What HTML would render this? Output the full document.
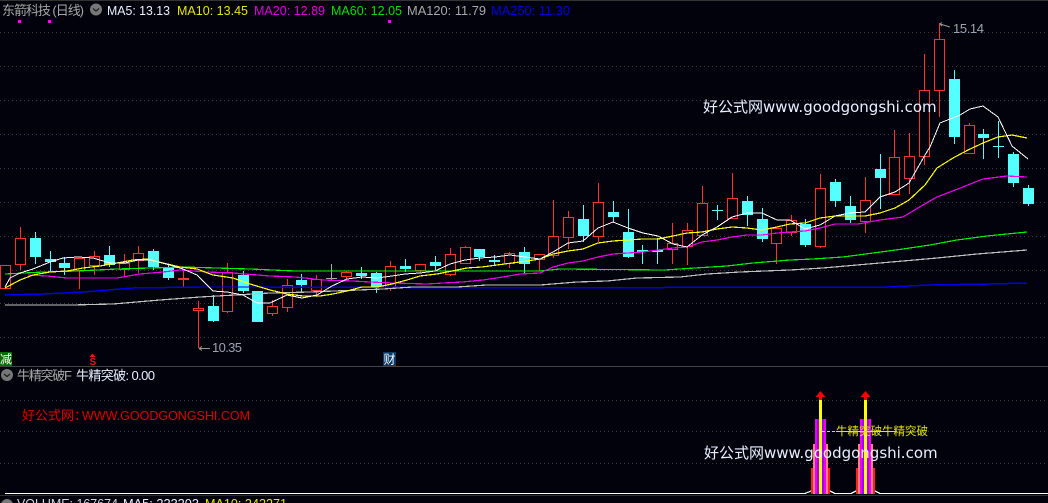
<!DOCTYPE html>
<html lang="zh">
<head>
<meta charset="utf-8">
<title>东箭科技 (日线)</title>
<style>
html,body{margin:0;padding:0;background:#02020c;width:1048px;height:503px;overflow:hidden}
svg{display:block;position:absolute;left:0;top:0}
text{font-family:"Liberation Sans","Noto Sans CJK SC",sans-serif;font-size:13px;white-space:pre}
text.wm{font-family:"DejaVu Sans","Noto Sans CJK SC",sans-serif;font-size:15px}
</style>
</head>
<body>
<svg width="1048" height="503" viewBox="0 0 1048 503" xmlns="http://www.w3.org/2000/svg">
<rect width="1048" height="503" fill="#02020c"/>
<path d="M0 0.5H1048" stroke="#333" shape-rendering="crispEdges"/>
<g stroke="#3c3c3c" stroke-dasharray="1 3" shape-rendering="crispEdges">
<path d="M0 32.5H1048M0 66.5H1048M0 100.5H1048M0 134.5H1048M0 168.5H1048M0 202.5H1048M0 236.5H1048M0 270.5H1048M0 303.5H1048M0 337.5H1048M0 400.5H1048M0 431.5H1048M0 463.5H1048"/>
</g>
<path d="M0 366.5H1048" stroke="#444" shape-rendering="crispEdges"/>

<g shape-rendering="crispEdges">
<path fill="#02020c" stroke="#ff3232" d="M0.5 265.5h10v23h-10z
M20.5 227V238M20.5 264V270M15.5 238.5h10v26h-10z
M79.5 270V289M74.5 258.5h10v12h-10z
M94.5 251V256M94.5 265V275M89.5 256.5h10v9h-10z
M124.5 254V263M124.5 269V276M119.5 263.5h10v6h-10z
M138.5 246V253M138.5 260V273M133.5 253.5h10v7h-10z
M183.5 271V278M183.5 280V287M178.5 278.5h10v1h-10z
M198.5 301V308M198.5 311V348M193.5 308.5h10v2h-10z
M227.5 263V272M227.5 311V313M222.5 272.5h10v39h-10z
M272.5 300V306M272.5 313V316M267.5 306.5h10v7h-10z
M287.5 279V285M287.5 307V312M282.5 285.5h10v22h-10z
M316.5 275V279M316.5 290V297M311.5 279.5h10v11h-10z
M346.5 271V272M346.5 276V279M341.5 272.5h10v4h-10z
M390.5 261V266M390.5 288V291M385.5 266.5h10v22h-10z
M420.5 270V273M415.5 264.5h10v6h-10z
M450.5 248V254M450.5 274V276M445.5 254.5h10v20h-10z
M465.5 246V247M460.5 247.5h10v16h-10z
M509.5 252V253M509.5 263V268M504.5 253.5h10v10h-10z
M539.5 259V271M534.5 254.5h10v5h-10z
M553.5 200V236M553.5 255V258M548.5 236.5h10v19h-10z
M568.5 211V217M568.5 237V249M563.5 217.5h10v20h-10z
M598.5 183V202M598.5 236V242M593.5 202.5h10v34h-10z
M672.5 223V243M672.5 249V264M667.5 243.5h10v6h-10z
M687.5 223V230M687.5 246V265M682.5 230.5h10v16h-10z
M702.5 186V203M697.5 203.5h10v32h-10z
M732.5 173V198M727.5 198.5h10v20h-10z
M776.5 243V264M771.5 228.5h10v15h-10z
M791.5 215V220M791.5 232V236M786.5 220.5h10v12h-10z
M820.5 174V188M820.5 246V248M815.5 188.5h10v58h-10z
M865.5 177V200M865.5 221V233M860.5 200.5h10v21h-10z
M894.5 130V157M889.5 157.5h10v37h-10z
M909.5 133V156M909.5 178V194M904.5 156.5h10v22h-10z
M924.5 54V90M924.5 156V165M919.5 90.5h10v66h-10z
M939.5 23V39M939.5 90V117M934.5 39.5h10v51h-10z
M969.5 123V125M964.5 125.5h10v28h-10z"/>
<path fill="none" stroke="#54ffff" d="M35.5 232V264M50.5 251V271M64.5 257V275M109.5 246V267M153.5 249V270M168.5 264V280M213.5 295V322M243.5 271V293M301.5 274V292M361.5 267V279M376.5 272V293M405.5 259V272M435.5 256V270M479.5 249V261M494.5 255V265M524.5 247V273M583.5 205V242M613.5 201V222M628.5 209V258M642.5 245V264M657.5 238V264M717.5 205V220M747.5 196V226M762.5 208V242M805.5 219V247M835.5 179V207M850.5 196V223M880.5 154V209M954.5 70V144M983.5 129V159M998.5 121V158M1013.5 152V187M1028.5 185V206"/>
<path fill="#54ffff" d="M30 238h11v19h-11zM45 259h11v3h-11zM59 263h11v5h-11zM104 255h11v10h-11zM148 251h11v16h-11zM163 268h11v10h-11zM208 306h11v15h-11zM238 275h11v16h-11zM252 291h11v31h-11zM296 280h11v5h-11zM356 273h11v3h-11zM371 273h11v15h-11zM400 266h11v3h-11zM430 262h11v4h-11zM474 249h11v8h-11zM489 260h11v2h-11zM519 252h11v12h-11zM578 219h11v17h-11zM608 212h11v5h-11zM623 232h11v25h-11zM637 250h11v2h-11zM652 250h11v2h-11zM712 210h11v1h-11zM742 201h11v14h-11zM757 219h11v20h-11zM800 224h11v21h-11zM830 182h11v19h-11zM845 206h11v14h-11zM875 169h11v9h-11zM949 79h11v58h-11zM978 134h11v4h-11zM993 146h11v1h-11zM1008 154h11v29h-11zM1023 188h11v16h-11z"/>
<path stroke="#aaaaaa" fill="none" d="M331.5 264V281M326 278.5H337"/>
</g>

<g fill="none" shape-rendering="crispEdges">
<polyline stroke="#0000e6" stroke-width="1.5" points="5,295 43,294 83,292 133,288 200,287 270,287 540,288 790,287 887,287 930,285 990,284 1027,283"/>
<polyline stroke="#c0c0c0" stroke-width="1.2" points="5,305 72,305 113,304 160,300 200,297 270,293 310,292 383,289 413,287 457,287 487,285 540,285 577,282 607,281 637,278 680,277 707,274 740,272 790,270 823,268 857,265 903,261 937,258 977,254 1027,250"/>
<polyline stroke="#00f000" stroke-width="1.2" points="5,274 43,272 77,271 117,269 183,267 250,269 295,271 540,271 560,269 665,270 695,268 727,266 753,263 790,260 813,259 843,257 873,253 903,249 930,245 957,240 987,236 1027,232"/>
<polyline stroke="#f000f0" stroke-width="1.2" points="28,275 47,276 67,278 90,278 117,278 140,274 163,272 180,270 207,272 233,273 270,276 295,277 305,278 323,280 353,281 370,282 393,283 427,284 443,283 462,282 483,280 503,277 520,274 540,273 553,267 568,263 583,261 598,257 613,254 628,253 643,252 658,250 673,248 687,247 702,242 717,240 732,237 747,235 762,235 777,233 790,232 805,231 820,228 835,224 858,224 880,220 903,217 923,205 937,197 963,187 983,179 1007,176 1027,177"/>
<polyline stroke="#ffff00" stroke-width="1.2" points="5,288 20,280 33,275 50,272 67,271 83,268 100,266 117,263 133,260 147,259 163,263 180,267 197,269 213,275 233,278 250,284 270,290 287,294 303,296 320,296 333,294 347,291 362,287 377,287 392,284 407,280 420,276 437,274 452,271 467,268 482,267 497,265 512,263 527,261 540,259 553,254 568,251 583,249 598,243 613,241 628,240 643,239 658,239 673,236 687,233 702,232 717,229 732,227 747,228 762,230 777,227 790,224 805,223 820,218 835,216 850,216 865,216 880,213 895,208 909,200 925,185 937,168 953,158 968,150 983,143 998,137 1012,135 1027,138"/>
<polyline stroke="#ffffff" stroke-width="1" points="5,287 10,278 20,273 33,269 50,262 63,258 78,257 93,258 110,263 125,263 138,260 150,260 170,265 183,269 197,275 213,291 227,292 243,295 257,303 270,303 287,295 302,298 317,295 332,286 347,279 362,277 377,278 392,276 405,274 420,273 435,271 450,264 465,260 480,258 495,257 510,255 525,257 540,259 553,252 568,243 583,241 598,228 613,222 628,228 643,233 658,236 673,244 687,247 702,235 717,227 732,217 747,213 762,213 777,220 790,220 805,229 820,225 835,216 850,213 865,212 880,197 895,192 909,183 925,155 930,147 940,123 960,115 970,109 983,106 998,117 1012,146 1028,159"/>
</g>

<g fill="#ff00ff">
<rect x="18" y="20" width="3" height="3"/>
<rect x="48" y="20" width="3" height="3"/>
<rect x="388" y="20" width="3" height="3"/>
</g>

<text x="2" y="15" fill="#a8a8a8" textLength="82">东箭科技 (日线)</text>
<circle cx="96" cy="9.5" r="6" fill="#777"/>
<path d="M93 8.5l3 2.5 3-2.5" fill="none" stroke="#222" stroke-width="1.3"/>
<text x="107" y="15" fill="#e8f0ff" textLength="63" lengthAdjust="spacingAndGlyphs">MA5: 13.13</text>
<text x="177" y="15" fill="#e6e600" textLength="71" lengthAdjust="spacingAndGlyphs">MA10: 13.45</text>
<text x="254" y="15" fill="#e000e0" textLength="71" lengthAdjust="spacingAndGlyphs">MA20: 12.89</text>
<text x="331" y="15" fill="#00e000" textLength="71" lengthAdjust="spacingAndGlyphs">MA60: 12.05</text>
<text x="407" y="15" fill="#a8a8a8" textLength="79" lengthAdjust="spacingAndGlyphs">MA120: 11.79</text>
<text x="491" y="15" fill="#0000e0" textLength="79" lengthAdjust="spacingAndGlyphs">MA250: 11.30</text>

<path d="M940 24l10 3M940 24l2-1.500M940 24l2 2" stroke="#999" fill="none"/>
<text x="953" y="33" fill="#9aa4b0" textLength="31">15.14</text>
<path d="M199 348.500H210M199 348.500l3-2M199 348.500l3 2" stroke="#999" fill="none"/>
<text x="212" y="352" fill="#9aa4b0" textLength="30">10.35</text>

<text class="wm" x="703" y="112" fill="#e8f0ff">好公式网www.goodgongshi.com</text>

<rect x="0" y="352" width="12" height="14" fill="#0a6a0a"/>
<text x="0" y="363.500" fill="#fff" style="font-size:12px">减</text>
<text x="89.500" y="365" fill="#ff1010" style="font-size:10px;font-weight:bold">S</text>
<path d="M92.500 353.500l-3 3.500h6z" fill="#ff1010"/>
<rect x="383" y="352" width="13" height="14" fill="#0a3a6a"/>
<text x="383.500" y="363.500" fill="#fff" style="font-size:12px">财</text>

<circle cx="7" cy="375" r="6" fill="#777"/>
<path d="M4 374l3 2.500 3-2.500" fill="none" stroke="#222" stroke-width="1.3"/>
<text x="17" y="380" fill="#a8a8a8" textLength="55">牛精突破F</text>
<text x="76" y="380" fill="#e8f0ff" textLength="79">牛精突破: 0.00</text>
<text x="22" y="420" fill="#e00000">好公式网：</text>
<text x="82" y="420" fill="#e00000" textLength="168" lengthAdjust="spacingAndGlyphs">WWW.GOODGONGSHI.COM</text>

<g shape-rendering="crispEdges">
<g>
<rect x="811" y="468" width="19" height="26" fill="#ff2020"/>
<rect x="813" y="444" width="15" height="50" fill="#ff8080"/>
<rect x="815" y="419" width="11" height="75" fill="#f000f0"/>
<rect x="817" y="419" width="7" height="75" fill="#a000ff"/>
<rect x="819" y="400" width="3" height="94" fill="#ffff00"/>
<rect x="819" y="396" width="3" height="4" fill="#ff0000"/>
</g>
<g transform="translate(45 0)">
<rect x="811" y="468" width="19" height="26" fill="#ff2020"/>
<rect x="813" y="444" width="15" height="50" fill="#ff8080"/>
<rect x="815" y="419" width="11" height="75" fill="#f000f0"/>
<rect x="817" y="419" width="7" height="75" fill="#a000ff"/>
<rect x="819" y="400" width="3" height="94" fill="#ffff00"/>
<rect x="819" y="396" width="3" height="4" fill="#ff0000"/>
</g>
</g>
<path d="M820.500 391l5 6h-10z" fill="#ff0000"/>
<path d="M865.500 391l5 6h-10z" fill="#ff0000"/>

<path d="M5 493.500H805L811 491M830 491L835 493.500H851L856 491M875 491L880 493.500H1048" fill="none" stroke="#fff" stroke-width="1.200" shape-rendering="crispEdges"/>
<path d="M0 495.500H1048" stroke="#333" shape-rendering="crispEdges"/>

<path d="M822 431.500H835" stroke="#e6e600" stroke-dasharray="3 2" shape-rendering="crispEdges"/>
<path d="M836 431.500H895" stroke="#e6e600" shape-rendering="crispEdges"/>
<text x="836" y="435" fill="#e6e600" style="font-size:11.500px">牛精突破</text>
<text x="882" y="435" fill="#e6e600" style="font-size:11.500px">牛精突破</text>

<text class="wm" x="704" y="458" fill="#e8f0ff">好公式网www.goodgongshi.com</text>

<circle cx="7" cy="505" r="6" fill="#777"/>
<text x="17" y="508" fill="#d0d8e0" textLength="101" lengthAdjust="spacingAndGlyphs">VOLUME: 167674</text>
<text x="123" y="508" fill="#e8f0ff" textLength="76" lengthAdjust="spacingAndGlyphs">MA5: 223203</text>
<text x="205" y="508" fill="#e6e600" textLength="82" lengthAdjust="spacingAndGlyphs">MA10: 242271</text>
</svg>
</body>
</html>
